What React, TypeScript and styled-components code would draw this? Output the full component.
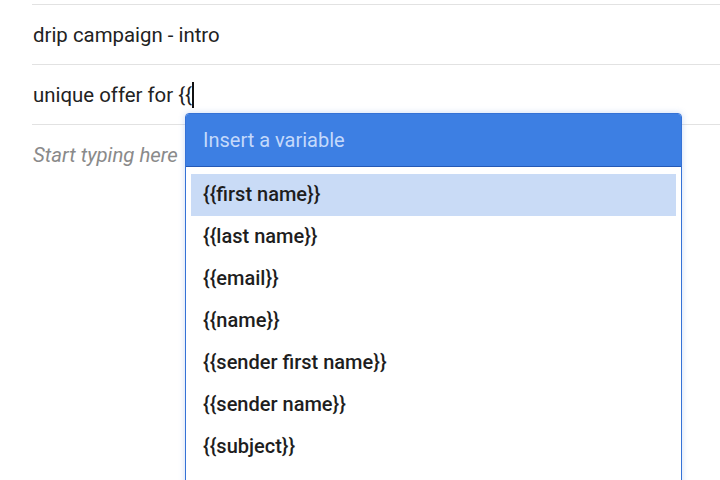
import React from "react";
import styled, { createGlobalStyle } from "styled-components";

const Global = createGlobalStyle`
  html, body { margin: 0; padding: 0; background: #ffffff; }
  body { font-family: Roboto, "Liberation Sans", Arial, sans-serif; overflow: hidden; }
  * { box-sizing: border-box; }
`;

const Page = styled.div`
  position: relative;
  width: 720px;
  height: 480px;
  padding: 4px 0 0 32px;
  overflow: hidden;
`;

const Fields = styled.div`
  display: flex;
  flex-direction: column;
  border-top: 1px solid #e2e2e2;
`;

const Field = styled.div<{ $placeholder?: boolean }>`
  height: 60px;
  display: flex;
  align-items: center;
  padding-left: 1px;
  border-bottom: ${(p) => (p.$placeholder ? "none" : "1px solid #e2e2e2")};
  font-size: 20.4px;
  color: ${(p) => (p.$placeholder ? "#8a8a8a" : "#222222")};
  font-style: ${(p) => (p.$placeholder ? "italic" : "normal")};
`;

const Caret = styled.span`
  display: inline-block;
  width: 2px;
  height: 26px;
  background: #111;
  vertical-align: middle;
`;

const Popup = styled.div`
  position: absolute;
  left: 185px;
  top: 113px;
  width: 497px;
  height: 400px;
  background: #ffffff;
  border: 1px solid #3572d6;
  border-radius: 4px 4px 0 0;
  box-shadow: 0 0 6px rgba(60, 120, 220, 0.25);
  display: flex;
  flex-direction: column;
`;

const PopupHeader = styled.div`
  height: 53px;
  background: #3d7fe3;
  border-bottom: 1px solid #2559b5;
  border-radius: 3px 3px 0 0;
  display: flex;
  align-items: center;
  padding-left: 17px;
  font-size: 20px;
  color: #c4d9fb;
`;

const List = styled.div`
  display: flex;
  flex-direction: column;
  padding: 7px 5px 0 5px;
`;

const Item = styled.div<{ $active?: boolean }>`
  height: 42px;
  display: flex;
  align-items: center;
  padding: 0 0 2px 12px;
  font-size: 20px;
  font-weight: 500;
  color: #1e1e1e;
  background: ${(p) => (p.$active ? "#c9dbf6" : "transparent")};
`;

const variables = [
  "{{first name}}",
  "{{last name}}",
  "{{email}}",
  "{{name}}",
  "{{sender first name}}",
  "{{sender name}}",
  "{{subject}}",
];

export default function App() {
  return (
    <>
      <Global />
      <Page>
        <Fields>
          <Field>drip campaign - intro</Field>
          <Field>
            unique offer for {"{{"}
            <Caret />
          </Field>
          <Field $placeholder>Start typing here</Field>
        </Fields>
        <Popup>
          <PopupHeader>Insert a variable</PopupHeader>
          <List>
            {variables.map((v, i) => (
              <Item key={v} $active={i === 0}>
                {v}
              </Item>
            ))}
          </List>
        </Popup>
      </Page>
    </>
  );
}
